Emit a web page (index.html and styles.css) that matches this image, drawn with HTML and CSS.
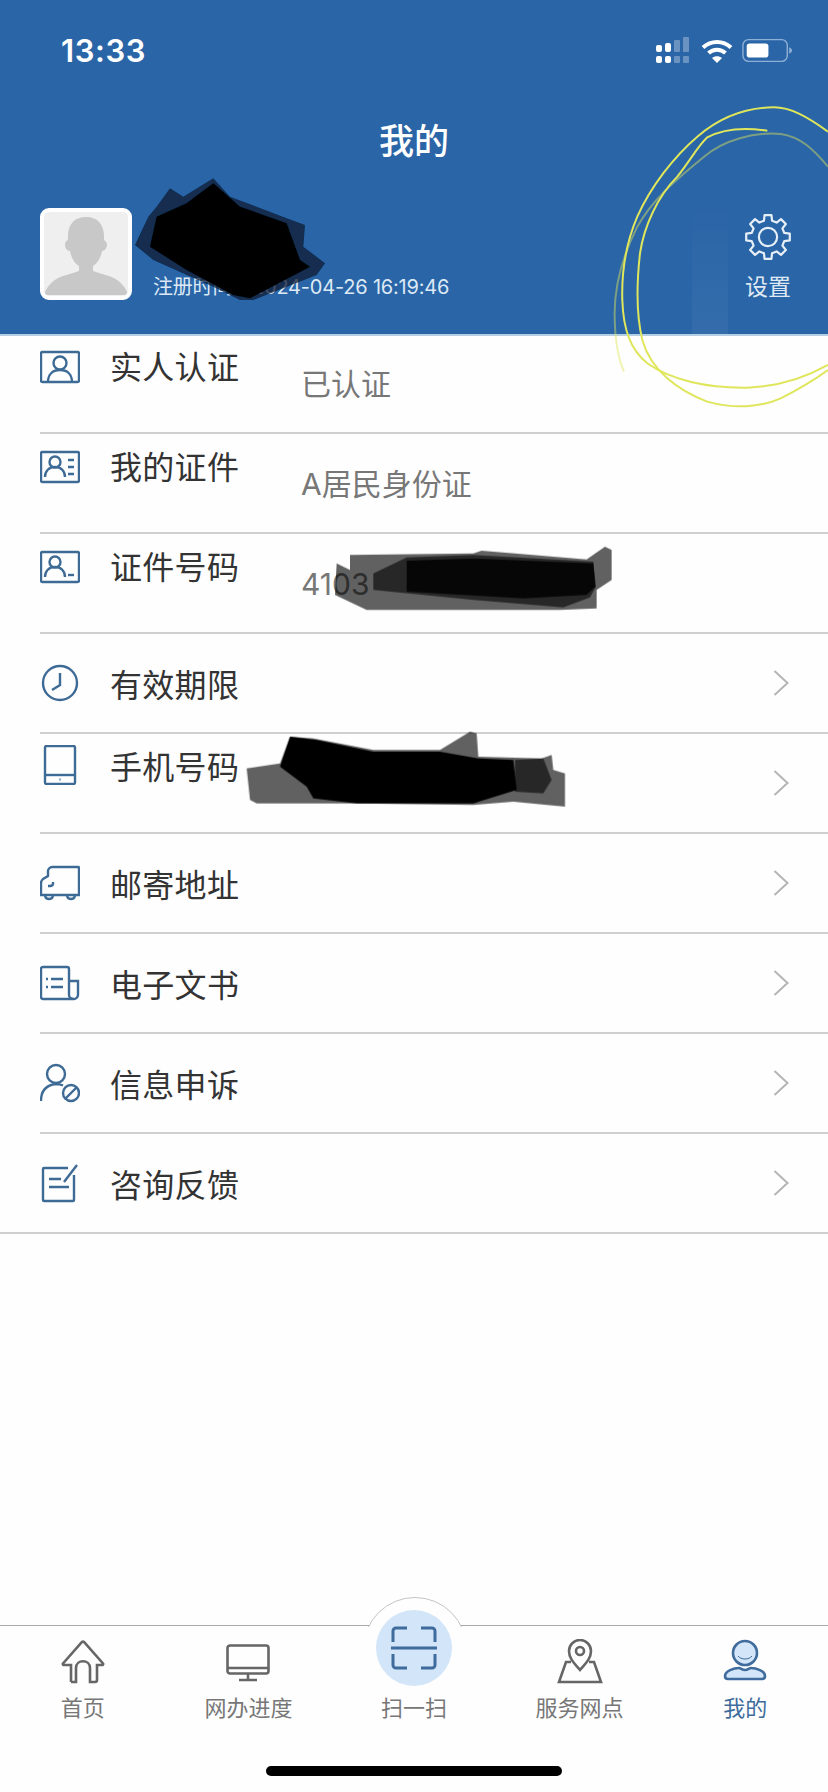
FILE: index.html
```html
<!DOCTYPE html>
<html lang="zh-CN">
<head>
    <meta charset="UTF-8">
    <meta name="viewport" content="width=device-width, initial-scale=1.0">
    <title>我的</title>
    <link rel="stylesheet" href="styles.css">
</head>
<body>
    <div class="page">
        <header class="header">
            <div class="status">
                <span class="time">13:33</span>
                <div class="status-icons">
                    <svg class="signal" viewBox="0 0 33 26" fill="#fff">
                        <rect x="0" y="8" width="6" height="7" rx="2"/><rect x="0" y="19" width="6" height="7" rx="2"/>
                        <rect x="9" y="6" width="6" height="9" rx="2"/><rect x="9" y="19" width="6" height="7" rx="2"/>
                        <g opacity=".3"><rect x="18" y="3" width="6" height="12" rx="1"/><rect x="18" y="19" width="6" height="7" rx="1"/>
                        <rect x="27" y="0" width="6" height="15" rx="1"/><rect x="27" y="19" width="6" height="7" rx="1"/></g>
                    </svg>
                    <svg class="wifi" viewBox="0 0 32 25" fill="none" stroke="#fff" stroke-width="4">
                        <path d="M2 9.5C10 2 22 2 30 9.5"/><path d="M7.5 15C12.500 10.500 19.500 10.500 24.500 15"/>
                        <path d="M16 25l-5-5c3-2.500 7-2.500 10 0z" fill="#fff" stroke="none"/>
                    </svg>
                    <svg class="battery" viewBox="0 0 53 25">
                        <rect x="1" y="1" width="47" height="23" rx="6" fill="none" stroke="#8fb0d6" stroke-width="1.500"/>
                        <rect x="5" y="5" width="23" height="15" rx="3" fill="#fff"/>
                        <path d="M50 9c2 1 3 2 3 3.500s-1 2.500-3 3.500z" fill="#8fb0d6"/>
                    </svg>
                </div>
            </div>
            <h1 class="title">我的</h1>
            <div class="profile">
                <div class="avatar">
                    <svg viewBox="0 0 84 84" fill="#c8c8c8">
                        <path d="M1 80c3-7 9-13 18-16 6-2 11-3 16-5v-5c-5-3-8-9-9-15-3 0-5-3-5-6s1-4 3-5c-1-14 5-23 18-23s19 9 18 23c2 1 3 3 3 5s-2 6-5 6c-1 6-4 12-9 15v5c5 2 10 3 16 5 9 3 15 9 18 16 0 2-1 3-3 3H4c-2 0-3-1-3-3z"/>
                    </svg>
                </div>
                <div class="profile-text">
                    <span class="reg-time">注册时间：2024-04-26 16:19:46</span>
                </div>
                <div class="settings">
                    <svg viewBox="-25 -25 50 50" fill="none" stroke="#e6eef6" stroke-width="2.300" stroke-linejoin="round">
                        <polygon points="-4.200,-17 -3.600,-22.700 3.600,-22.700 4.200,-17 9,-15 13.500,-18.600 18.600,-13.500 15,-9 17,-4.200 22.700,-3.600 22.700,3.600 17,4.200 15,9 18.600,13.500 13.500,18.600 9,15 4.200,17 3.600,22.700 -3.600,22.700 -4.200,17 -9,15 -13.500,18.600 -18.600,13.500 -15,9 -17,4.200 -22.700,3.600 -22.700,-3.600 -17,-4.200 -15,-9 -18.600,-13.500 -13.500,-18.600 -9,-15"/>
                        <circle cx="0" cy="0" r="9.500"/>
                    </svg>
                    <span>设置</span>
                </div>
            </div>
        </header>

        <main class="list">
            <div class="item item-raised">
                <svg class="item-icon" viewBox="0 0 40 32"><rect x="1" y="1" width="38" height="30" rx="1.500"/><circle cx="20" cy="12" r="6.500"/><path d="M8 31c0-8 5-12 12-12s12 4 12 12"/></svg>
                <span class="label">实人认证</span>
                <span class="value">已认证</span>
            </div>
            <div class="item item-raised">
                <svg class="item-icon" viewBox="0 0 40 32"><rect x="1" y="1" width="38" height="30" rx="1.500"/><circle cx="15" cy="11" r="5.500"/><path d="M5 26c0-6 4-10 10-10s10 4 10 10"/><path d="M28 9h6M28 16h6M28 23h6"/></svg>
                <span class="label">我的证件</span>
                <span class="value">A居民身份证</span>
            </div>
            <div class="item item-raised">
                <svg class="item-icon" viewBox="0 0 40 32"><rect x="1" y="1" width="38" height="30" rx="1.500"/><circle cx="15" cy="11" r="5.500"/><path d="M5 26c0-6 4-10 10-10s10 4 10 10"/><path d="M28 24h6"/></svg>
                <span class="label">证件号码</span>
                <span class="value">4103</span>
            </div>
            <div class="item">
                <svg class="item-icon" viewBox="0 0 40 36"><circle cx="20" cy="18" r="17"/><path d="M20 8v12l-8 5"/></svg>
                <span class="label">有效期限</span>
                <svg class="chevron" viewBox="0 0 16 26"><path d="M1.500 1l13 12-13 12"/></svg>
            </div>
            <div class="item item-raised">
                <svg class="item-icon item-icon-tablet" viewBox="0 0 40 40"><rect x="5" y="1" width="30" height="38" rx="1.500"/><path d="M5 30h30"/><path d="M19.500 34.500h1"/></svg>
                <span class="label">手机号码</span>
                <svg class="chevron" viewBox="0 0 16 26"><path d="M1.500 1l13 12-13 12"/></svg>
            </div>
            <div class="item">
                <svg class="item-icon" viewBox="0 0 40 34"><path d="M12 1h26a1 1 0 0 1 1 1v27H1V17c0-2 1-3 2-4l5-3V5c0-2 2-4 4-4z"/><path d="M13 16v2c0 2-2 2-5 2"/><path d="M5 30c1 4 7 4 8 0M27 30c1 4 7 4 8 0"/></svg>
                <span class="label">邮寄地址</span>
                <svg class="chevron" viewBox="0 0 16 26"><path d="M1.500 1l13 12-13 12"/></svg>
            </div>
            <div class="item">
                <svg class="item-icon" viewBox="0 0 40 34"><path d="M34 33H3a2 2 0 0 1-2-2V3a2 2 0 0 1 2-2h24a2 2 0 0 1 2 2v26c0 2 2 4 5 4 2 0 4-2 4-4V15h-9"/><path d="M6 13h2M11 13h12M6 21h2M11 21h12"/></svg>
                <span class="label">电子文书</span>
                <svg class="chevron" viewBox="0 0 16 26"><path d="M1.500 1l13 12-13 12"/></svg>
            </div>
            <div class="item">
                <svg class="item-icon" viewBox="0 0 40 38"><circle cx="16" cy="10" r="9"/><path d="M1 37c0-10 5-16 15-17 3 0 5 .5 7 1.500"/><circle cx="31" cy="29" r="8"/><path d="M25.500 34.500l11-11"/></svg>
                <span class="label">信息申诉</span>
                <svg class="chevron" viewBox="0 0 16 26"><path d="M1.500 1l13 12-13 12"/></svg>
            </div>
            <div class="item item-last">
                <svg class="item-icon" viewBox="0 0 40 38"><path d="M28 4H4a1 1 0 0 0-1 1v31a1 1 0 0 0 1 1h29a1 1 0 0 0 1-1V11"/><path d="M9 15h12M9 23h20"/><path d="M24 18L37 1"/></svg>
                <span class="label">咨询反馈</span>
                <svg class="chevron" viewBox="0 0 16 26"><path d="M1.500 1l13 12-13 12"/></svg>
            </div>
        </main>

        <nav class="tabbar">
            <div class="tab">
                <div class="tab-icon">
                    <svg class="tab-svg home" viewBox="0 0 44 44"><path d="M10 42V25H2.500a1 1 0 0 1-.500-1.500L21 2a1.500 1.500 0 0 1 2 0l19 21.500a1 1 0 0 1-.500 1.500H36v15a2 2 0 0 1-2 2h-5V28c0-9-14-9-14 0v14h-5"/></svg>
                </div>
                <span>首页</span>
            </div>
            <div class="tab">
                <div class="tab-icon">
                    <svg class="tab-svg monitor" viewBox="0 0 44 38"><rect x="1.500" y="1.500" width="41" height="28" rx="2.500"/><path d="M1.500 24h41M22 30v5M13 36h18"/></svg>
                </div>
                <span>网办进度</span>
            </div>
            <div class="tab tab-scan">
                <div class="tab-icon">
                    <div class="scan-circle">
                        <svg viewBox="0 0 46 44"><path d="M16 2H5a3 3 0 0 0-3 3v11M30 2h11a3 3 0 0 1 3 3v11M16 42H5a3 3 0 0 1-3-3V28M30 42h11a3 3 0 0 0 3-3V28M0 22h46"/></svg>
                    </div>
                </div>
                <span>扫一扫</span>
            </div>
            <div class="tab">
                <div class="tab-icon">
                    <svg class="tab-svg pin" viewBox="0 0 46 45"><path d="M23 31C18 25 12 20 12 12a11 11 0 0 1 22 0c0 8-6 13-11 19z"/><circle cx="23" cy="12" r="4"/><path d="M14 23H9L2 43h42l-7-20h-5"/></svg>
                </div>
                <span>服务网点</span>
            </div>
            <div class="tab tab-active">
                <div class="tab-icon">
                    <svg class="tab-svg me" viewBox="0 0 44 42"><circle cx="22" cy="14" r="12" fill="#d3e5f8"/><path d="M15 17c3 4 11 4 14 0" stroke-width="1"/><path d="M16 29c-5 0-14 3-14 8 0 2 1 3 3 3h34c2 0 3-1 3-3 0-5-9-8-14-8-2 0-3 2-6 2s-4-2-6-2z" fill="#d3e5f8"/></svg>
                </div>
                <span>我的</span>
            </div>
        </nav>
        <div class="home-bar"></div>

        <!-- marks drawn over the screenshot by hand -->
        <svg class="scribbles" viewBox="0 0 828 1792">
            <defs>
                <filter id="soft" x="-5%" y="-5%" width="110%" height="110%"><feGaussianBlur stdDeviation="1.200"/></filter>
            </defs>
            <g transform="scale(.3333)" filter="url(#soft)">
                <path d="M405 735L445 650 470 620 510 565 550 590 640 535 690 590 860 655 915 675 910 740 975 790 950 825 760 900 720 900 640 860 460 780z" fill="#0a1a30" opacity=".75"/>
                <path d="M450 740L470 650 560 610 640 550 720 620 860 670 900 780 930 800 750 895 700 885 560 810z" fill="#000"/>
            </g>
            <g transform="translate(240 520) scale(.3333)" filter="url(#soft)">
                <path d="M330 105L700 100 725 92 1040 118 1095 80 1115 90 1115 180 1070 210 1070 265 960 270 380 270 285 225 290 130 330 150z" fill="#000" opacity=".62"/>
                <path d="M400 160L500 112 700 105 1060 125 1068 200 1050 232 970 262 700 240 400 210z" fill="#000" opacity=".6"/>
                <path d="M500 122L700 115 1060 130 1066 200 1040 225 850 235 500 215z" fill="#000" opacity=".85"/>
                <path d="M20 745L120 730 150 650 220 655 400 690 600 690 690 635 710 640 715 710 905 715 935 705 940 750 975 760 975 860 820 845 700 855 350 850 50 850 30 840z" fill="#000" opacity=".62"/>
                <path d="M825 720L910 715 935 780 910 820 825 815z" fill="#000" opacity=".6"/>
                <path d="M120 740L150 650 230 660 400 695 600 695 715 715 820 720 830 810 700 850 350 850 220 835 200 800z" fill="#000"/>
            </g>
            <g transform="translate(414 0) scale(.3333)" fill="none" stroke="#dfe65c" stroke-width="6">
                <path d="M1242 395C1180 350 1130 322 1080 322 1000 322 920 350 850 410 780 470 710 560 670 650 640 720 622 800 625 900 628 990 650 1050 700 1090 770 1140 880 1165 1000 1163 1100 1160 1180 1130 1242 1095"/>
                <path d="M1060 392C1000 383 930 385 880 412 850 440 830 480 790 530 730 590 690 680 678 760 668 850 668 950 685 1020 710 1110 790 1170 880 1205 960 1228 1040 1222 1100 1195 1150 1170 1200 1140 1242 1110"/>
                <path d="M1242 500C1200 450 1160 410 1100 402 1020 395 930 420 870 470 800 530 720 590 670 680 630 760 600 850 602 950 603 1010 610 1070 630 1115" opacity=".45"/>
            </g>
        </svg>
    </div>
</body>
</html>
```

FILE: styles.css
```css
* {
    box-sizing: border-box;
}

body {
    margin: 0;
    background-color: #fff;
    font-family: "Noto Sans CJK SC", "Noto Sans", sans-serif;
}

.page {
    position: relative;
    display: flex;
    flex-direction: column;
    width: 828px;
    height: 1792px;
    overflow: hidden;
    background-color: #fefefe;
}

/* header */
.header {
    position: relative;
    height: 336px;
    background-color: #2a65a7;
    border-bottom: 2px solid #b4cfe4;
    color: #fff;
}

.header::after {
    content: "";
    position: absolute;
    left: 692px;
    bottom: 0;
    width: 36px;
    height: 130px;
    background: linear-gradient(to top, rgba(255, 255, 255, .05), rgba(255, 255, 255, 0));
}

.status {
    display: flex;
    justify-content: space-between;
    align-items: center;
    height: 100px;
    padding: 0 36px 0 61px;
}

.time {
    font-family: Inter, sans-serif;
    font-size: 31px;
    font-weight: 600;
    letter-spacing: .6px;
}

.status-icons {
    display: flex;
    align-items: center;
    gap: 9px;
}

.signal {
    width: 33px;
    height: 26px;
    margin-right: 3px;
}

.wifi {
    width: 32px;
    height: 25px;
}

.battery {
    width: 50px;
    height: 25px;
}

.title {
    margin: 15px 0 0;
    font-size: 35px;
    font-weight: 500;
    line-height: 48px;
    text-align: center;
}

.profile {
    display: flex;
    margin-top: 45px;
    padding: 0 36px 0 40px;
}

.avatar {
    width: 92px;
    height: 92px;
    border-radius: 9px;
    background-color: #f0efef;
    border: 4px solid #fff;
}

.avatar svg {
    display: block;
    width: 84px;
    height: 84px;
}

.profile-text {
    display: flex;
    align-items: flex-end;
    margin-left: 21px;
    flex: 1;
}

.reg-time {
    font-family: Inter, "Noto Sans CJK SC", sans-serif;
    font-size: 20px;
    line-height: 28px;
    letter-spacing: -.2px;
    color: #dde9f5;
}

.settings {
    display: flex;
    flex-direction: column;
    align-items: center;
    margin-top: 5px;
    color: #dfe9f3;
    font-size: 23px;
    line-height: 32px;
}

.settings svg {
    width: 48px;
    height: 48px;
    margin-bottom: 8px;
}

/* list */
.list {
    flex: 1;
}

.item {
    display: flex;
    align-items: center;
    height: 100px;
    margin-left: 40px;
    padding-right: 39px;
    border-bottom: 2px solid #cfcfcf;
}

.item:first-child {
    height: 98px;
}

.item-raised {
    align-items: flex-start;
    padding-top: 8px;
}

.item:first-child.item-raised {
    padding-top: 6px;
}

.item-last {
    margin-left: 0;
    padding-left: 40px;
}

.item-icon {
    flex: none;
    width: 40px;
    height: 40px;
    margin-right: 30px;
    fill: none;
    stroke: #3e6b95;
    stroke-width: 2.400;
}

.item-raised .item-icon {
    margin-top: 5px;
}

.item-raised .item-icon-tablet {
    margin-top: 3px;
}

.label {
    width: 191px;
    font-size: 32px;
    line-height: 46px;
    letter-spacing: .3px;
    color: #333;
}

.value {
    margin-top: 19px;
    font-family: Inter, "Noto Sans CJK SC", sans-serif;
    font-size: 30px;
    line-height: 46px;
    color: #777;
}

.chevron {
    width: 16px;
    height: 26px;
    margin-left: auto;
    align-self: center;
    fill: none;
    stroke: #b5b5b5;
    stroke-width: 2;
}

.item-raised .chevron {
    margin-top: -8px;
}

/* tab bar */
.tabbar {
    position: relative;
    display: grid;
    grid-template-columns: repeat(5, 1fr);
    height: 167px;
    padding-top: 11px;
    border-top: 1px solid #aaa;
}

.tabbar::before {
    content: "";
    position: absolute;
    left: 363px;
    top: -29px;
    width: 102px;
    height: 102px;
    border-radius: 50%;
    border: 1px solid #c4c4c4;
    clip-path: inset(0 0 74px 0);
    background-color: #fefefe;
}

.tab {
    position: relative;
    display: flex;
    flex-direction: column;
    align-items: center;
    font-size: 22px;
    line-height: 30px;
    color: #777;
}

.tab-active {
    color: #3f6c9c;
}

.tab-icon {
    display: flex;
    justify-content: center;
    align-items: flex-start;
    height: 54px;
}

.tab-svg {
    fill: none;
    stroke: #666;
    stroke-width: 2.600;
}

.home {
    width: 44px;
    height: 44px;
    margin-top: 3px;
}

.monitor {
    width: 44px;
    height: 38px;
    margin-top: 7px;
}

.pin {
    width: 46px;
    height: 45px;
    margin-top: 2px;
}

.me {
    width: 44px;
    height: 42px;
    margin-top: 2px;
    stroke: #3f6c9c;
}

.scan-circle {
    display: flex;
    justify-content: center;
    align-items: center;
    width: 76px;
    height: 76px;
    margin-top: -27px;
    border-radius: 50%;
    background-color: #d3e5f8;
}

.scan-circle svg {
    width: 46px;
    height: 44px;
    fill: none;
    stroke: #3f6c9c;
    stroke-width: 3;
}

.home-bar {
    position: absolute;
    left: 266px;
    bottom: 16px;
    width: 296px;
    height: 10px;
    border-radius: 5px;
    background-color: #000;
}

.scribbles {
    position: absolute;
    left: 0;
    top: 0;
    width: 828px;
    height: 1792px;
    pointer-events: none;
}
```
